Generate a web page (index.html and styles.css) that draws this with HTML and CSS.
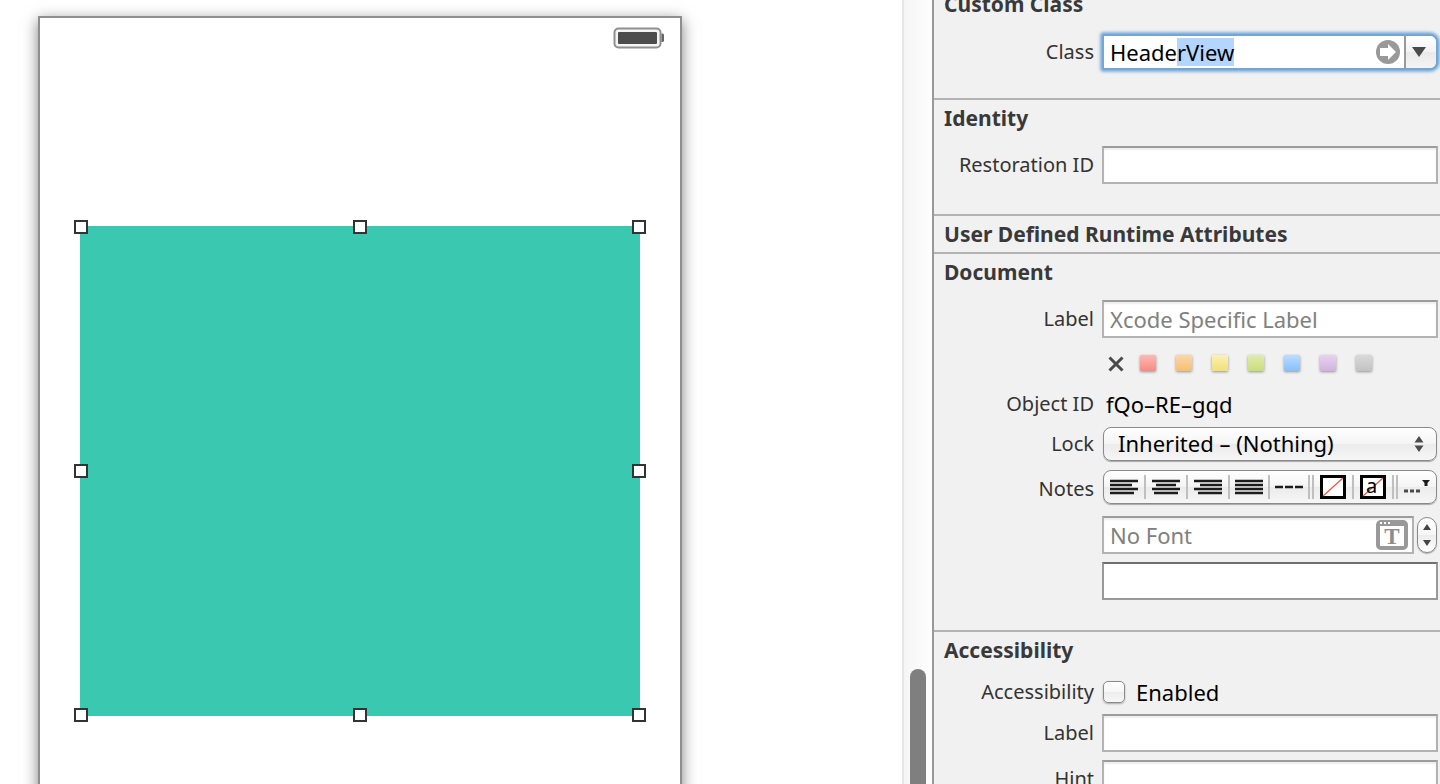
FILE: index.html
```html
<!DOCTYPE html>
<html lang="en">
<head>
<meta charset="utf-8">
<title>Identity Inspector</title>
<link rel="stylesheet" href="styles.css">
</head>
<body>
<div class="editor">
  <main class="canvas">
    <div class="artboard">
      <div class="status-bar">
        <svg class="battery" width="52" height="22" viewBox="0 0 52 22" aria-label="Battery">
          <rect x="2.500" y="1.500" width="46" height="19" rx="4" fill="#f4f4f4" stroke="#8f8f8f" stroke-width="2"/>
          <rect x="6" y="5" width="39" height="12" rx="1" fill="#4c4c4c"/>
          <path d="M49.500 6.500h1a1.500 1.500 0 0 1 1.500 1.500v5.500a1.500 1.500 0 0 1-1.500 1.500h-1z" fill="#666"/>
        </svg>
      </div>
      <div class="header-view">
        <div class="handles">
          <span></span><span></span><span></span>
          <span></span><span></span>
          <span></span><span></span><span></span>
        </div>
      </div>
    </div>
  </main>
  <div class="scroller"><div class="scroll-thumb"></div></div>

  <aside class="inspector">
    <section class="section section-first">
      <h2>Custom Class</h2>
      <div class="rows rows-class">
        <label for="class">Class</label>
        <div class="combo">
          <input id="class" class="combo-input" type="text" value="HeaderView" spellcheck="false">
          <button class="jump" type="button" aria-label="Go to class">
            <svg width="24" height="24" viewBox="0 0 24 24"><circle cx="12" cy="12" r="12" fill="#999"/><path d="M4 8h8V4l8 8-8 8v-4H4z" fill="#fff"/></svg>
          </button>
          <button class="combo-arrow" type="button" aria-label="Show classes">
            <svg width="14" height="10" viewBox="0 0 14 10"><path d="M0 0h14L7 10z" fill="#4b4b4b"/></svg>
          </button>
        </div>
      </div>
    </section>

    <section class="section">
      <h2>Identity</h2>
      <div class="rows">
        <label for="restoration">Restoration ID</label>
        <input id="restoration" class="field" type="text">
      </div>
    </section>

    <section class="section">
      <h2>User Defined Runtime Attributes</h2>
    </section>

    <section class="section">
      <h2>Document</h2>
      <div class="rows">
        <label for="doc-label">Label</label>
        <input id="doc-label" class="field" type="text" placeholder="Xcode Specific Label">

        <div class="swatches">
          <button class="clear" type="button" aria-label="No color"><svg width="16" height="16" viewBox="0 0 16 16"><path d="M1.500 1.500l13 13M14.500 1.500l-13 13" stroke="#4a4a4a" stroke-width="3"/></svg></button>
          <button class="swatch red" type="button" aria-label="Red"></button>
          <button class="swatch orange" type="button" aria-label="Orange"></button>
          <button class="swatch yellow" type="button" aria-label="Yellow"></button>
          <button class="swatch green" type="button" aria-label="Green"></button>
          <button class="swatch blue" type="button" aria-label="Blue"></button>
          <button class="swatch purple" type="button" aria-label="Purple"></button>
          <button class="swatch gray" type="button" aria-label="Gray"></button>
        </div>

        <span class="label">Object ID</span>
        <output class="value">fQo–RE–gqd</output>

        <label for="lock">Lock</label>
        <div class="popup">
          <select id="lock"><option>Inherited – (Nothing)</option></select>
          <svg class="popup-arrows" width="10" height="16" viewBox="0 0 10 16"><path d="M5 0l4.500 6.500h-9zM5 16L.5 9.500h9z" fill="#4b4b4b"/></svg>
        </div>

        <span class="label">Notes</span>
        <div class="toolbar">
          <button class="wide" type="button" aria-label="Align left"><svg width="28" height="16" viewBox="0 0 28 16"><path d="M0 2h28M0 6h22M0 10h28M0 14h24" stroke="#1c1c1c" stroke-width="2.400"/></svg></button>
          <i class="sep"></i>
          <button class="wide" type="button" aria-label="Center"><svg width="28" height="16" viewBox="0 0 28 16"><path d="M0 2h28M4 6h20M0 10h28M2 14h24" stroke="#1c1c1c" stroke-width="2.400"/></svg></button>
          <i class="sep"></i>
          <button class="wide" type="button" aria-label="Align right"><svg width="28" height="16" viewBox="0 0 28 16"><path d="M0 2h28M6 6h22M0 10h28M4 14h24" stroke="#1c1c1c" stroke-width="2.400"/></svg></button>
          <i class="sep"></i>
          <button type="button" aria-label="Justify"><svg width="28" height="16" viewBox="0 0 28 16"><path d="M0 2h28M0 6h28M0 10h28M0 14h28" stroke="#1c1c1c" stroke-width="2.400"/></svg></button>
          <i class="sep"></i>
          <button type="button" aria-label="Natural alignment"><svg width="28" height="16" viewBox="0 0 28 16"><path d="M0 8h8M10 8h8M20 8h8" stroke="#1c1c1c" stroke-width="2.400"/></svg></button>
          <i class="sep double"></i>
          <button type="button" aria-label="Background color"><svg width="26" height="24" viewBox="0 0 26 24"><rect x="1.500" y="1.500" width="23" height="21" fill="#fff" stroke="#000" stroke-width="3"/><path d="M3 21L23 3" stroke="#f4543f" stroke-width="1.200"/></svg></button>
          <i class="sep"></i>
          <button type="button" aria-label="Text color"><svg width="26" height="24" viewBox="0 0 26 24"><rect x="1.500" y="1.500" width="23" height="21" fill="#fff" stroke="#000" stroke-width="3"/><path d="M3 21L23 3" stroke="#f4543f" stroke-width="1.200"/><text x="6" y="18" class="glyph-a">a</text></svg></button>
          <i class="sep double"></i>
          <button type="button" aria-label="More"><svg width="28" height="16" viewBox="0 0 28 16"><path d="M1 12h4M7 12h4M13 12h4" stroke="#4a4a4a" stroke-width="3"/><path d="M19 1h8l-2.500 3v3h-3V4z" fill="#1c1c1c"/></svg></button>
        </div>

        <div class="font-row">
          <div class="font-box">
            <input class="field" type="text" placeholder="No Font" aria-label="Font">
            <button class="font-button" type="button" aria-label="Choose font">
              <svg width="32" height="30" viewBox="0 0 32 30"><rect width="32" height="30" rx="5" fill="#999"/><rect x="4" y="6" width="24" height="20" fill="#fff"/><path d="M4 2h2v2H4zM8 2h2v2H8zM12 2h2v2h-2z" fill="#fff"/><text x="16" y="24" text-anchor="middle" class="glyph-t">T</text></svg>
            </button>
          </div>
          <button class="stepper" type="button" aria-label="Font size">
            <svg width="8" height="22" viewBox="0 0 8 22"><path d="M4 0l4 6H0zM4 22l-4-6h8z" fill="#454545"/></svg>
          </button>
        </div>

        <input class="field notes" type="text" aria-label="Notes text">
      </div>
    </section>

    <section class="section">
      <h2>Accessibility</h2>
      <div class="rows">
        <span class="label">Accessibility</span>
        <div class="check"><input id="enabled" type="checkbox"><label for="enabled">Enabled</label></div>
        <label for="acc-label">Label</label>
        <input id="acc-label" class="field" type="text">
        <label for="hint">Hint</label>
        <input id="hint" class="field" type="text">
      </div>
    </section>
  </aside>
</div>
<script src="script.js"></script>
</body>
</html>
```

FILE: styles.css
```css
* { box-sizing: border-box; }

body {
  margin: 0;
  overflow: hidden;
  background: #fff;
  font-family: "Lucida Grande", "Noto Sans", sans-serif;
  color: #333;
}

button, input, select {
  margin: 0;
  padding: 0;
  border: 0;
  border-radius: 0;
  background: none;
  font: inherit;
  color: #000;
  appearance: none;
  outline: none;
}

svg { display: block; overflow: visible; }

.editor { display: flex; height: 100vh; overflow: hidden; }

/* Canvas */
.canvas { flex: 1; min-width: 0; padding: 16px 0 0 38px; overflow: hidden; }

.artboard {
  width: 644px;
  height: 1140px;
  padding: 0 40px;
  border: 2px solid #8e8e8e;
  background: #fff;
  box-shadow: 0 4px 14px rgba(0, 0, 0, 0.5);
}

.status-bar {
  display: flex;
  justify-content: flex-end;
  height: 208px;
  margin-right: -24px;
  padding-top: 9px;
}

.header-view { position: relative; height: 490px; background: #3ac8b0; }

.handles {
  position: absolute;
  inset: -6px;
  display: grid;
  grid-template: repeat(3, 14px) / repeat(3, 14px);
  justify-content: space-between;
  align-content: space-between;
}

.handles span { border: 2px solid #333; background: #fff; }
.handles span:nth-child(5) { grid-column: 3; }

.scroller {
  width: 30px;
  padding: 669px 6px 0;
  border-left: 2px solid #e6e6e6;
  background: linear-gradient(90deg, #f5f5f5, #fefefe);
}

.scroll-thumb { width: 16px; height: 200px; border-radius: 8px; background: #7f7f7f; }

/* Inspector */
.inspector {
  width: 508px;
  border-left: 2px solid #999;
  background: #f1f1f1;
  overflow: hidden;
}

.section { border-top: 2px solid #b2b2b2; }
.section-first { margin-top: -16px; }

h2 {
  margin: 0;
  padding-left: 10px;
  font-size: 21px;
  font-weight: 700;
  line-height: 36px;
  color: #393939;
}

.rows {
  display: grid;
  grid-template-columns: 150px minmax(0, 1fr);
  gap: 8px;
  align-items: center;
  padding: 10px 2px 30px 10px;
}

.rows-class { padding-top: 12px; padding-bottom: 28px; }

.rows > label, .label {
  text-align: right;
  font-size: 20px;
  line-height: 28px;
  white-space: nowrap;
}

.field {
  width: 100%;
  height: 38px;
  padding: 0 6px;
  border: 2px solid #b2b2b2;
  border-top-color: #9c9c9c;
  background: #fff;
  font-size: 22px;
  box-shadow: inset 0 2px 2px #eee;
}

.field::placeholder { color: #808080; opacity: 1; }
.notes { grid-column: 2; border-color: #999; border-top-color: #707070; box-shadow: none; }

.combo {
  display: flex;
  align-items: center;
  height: 36px;
  border: 2px solid #74a5d3;
  border-radius: 2px 8px 8px 2px;
  background: #fff;
  box-shadow: 0 0 3px 2px #7fb0dd;
}

.combo-input { flex: 1; min-width: 0; padding-left: 6px; font-size: 22px; line-height: 28px; height: 28px; }
.combo-input::selection { background: #b4d5fe; color: #000; }
.jump { margin-right: 4px; }

.combo-arrow {
  display: flex;
  align-items: center;
  justify-content: center;
  width: 32px;
  height: 32px;
  padding-right: 4px;
  border-left: 2px solid #999;
  border-radius: 0 6px 6px 0;
  background: linear-gradient(#fff, #f2f2f2 50%, #e9e9e9 50%, #f4f4f4);
}

.swatches { grid-column: 2; display: flex; align-items: center; height: 36px; padding: 0 0 2px 6px; }
.clear { margin-right: 16px; padding-top: 2px; }

.swatch {
  width: 16px;
  height: 16px;
  margin-right: 20px;
  border-radius: 1px;
  box-shadow: 0 1px 3px rgba(0, 0, 0, 0.4);
}

.red { background: linear-gradient(#fbb9b4, #f98a82); }
.orange { background: linear-gradient(#fad7ac, #f6bf70); }
.yellow { background: linear-gradient(#faf1b4, #f1e079); }
.green { background: linear-gradient(#ddebb0, #c9de77); }
.blue { background: linear-gradient(#bcdcff, #86bff9); }
.purple { background: linear-gradient(#e7d2ee, #d2b1e1); }
.gray { background: linear-gradient(#d9d9d9, #c2c2c2); }

.value { padding-left: 4px; font-size: 22px; line-height: 28px; color: #000; }

.popup { position: relative; height: 36px; padding: 1px; }

.popup select {
  width: 100%;
  height: 34px;
  padding: 0 0 2px 14px;
  border: 1px solid #8a8a8a;
  border-radius: 8px;
  background: linear-gradient(#fff, #f4f4f4 50%, #ebebeb 50%, #f6f6f6);
  box-shadow: 0 1px 1px rgba(0, 0, 0, 0.3);
  font-size: 22px;
}

.popup-arrows { position: absolute; top: 10px; right: 14px; pointer-events: none; }

.toolbar {
  display: flex;
  align-items: center;
  align-self: start;
  height: 34px;
  margin: 0 1px 4px;
  border: 1px solid #8a8a8a;
  border-radius: 8px;
  background: linear-gradient(#fff, #f4f4f4 50%, #ebebeb 50%, #f6f6f6);
  box-shadow: 0 1px 1px rgba(0, 0, 0, 0.3);
}

.toolbar button { display: flex; flex: 1 1 38px; justify-content: center; }
.toolbar .wide { flex-basis: 40px; }
.sep { width: 2px; height: 24px; background: #bfbfbf; }
.sep.double { width: 6px; border: solid #bfbfbf; border-width: 0 2px; background: none; }
.glyph-a { font-size: 20px; }
.glyph-t { font: bold 23px "Liberation Serif", serif; fill: #8c8c8c; }

.font-row { grid-column: 2; display: flex; align-items: center; gap: 3px; }
.font-box { position: relative; flex: 1; }
.font-button { position: absolute; top: 4px; right: 6px; }

.stepper {
  display: flex;
  align-items: center;
  justify-content: center;
  width: 20px;
  height: 36px;
  margin-right: 1px;
  border: 1px solid #8a8a8a;
  border-radius: 10px;
  background: linear-gradient(#fff, #f6f6f6 50%, #ececec 50%, #fff);
  box-shadow: 0 1px 1px rgba(0, 0, 0, 0.3);
}

.check { display: flex; align-items: center; height: 28px; padding-left: 1px; gap: 11px; }
.check label { font-size: 22px; line-height: 28px; color: #000; }

.check input {
  width: 22px;
  height: 22px;
  border: 1px solid #8a8a8a;
  border-radius: 5px;
  background: linear-gradient(#fff, #f6f6f6 50%, #ececec 50%, #f8f8f8);
  box-shadow: 0 1px 2px rgba(0, 0, 0, 0.3);
}
```

FILE: script.js
```js
const classField = document.getElementById("class");
classField.focus({ preventScroll: true });
classField.setSelectionRange(5, 10);
```
